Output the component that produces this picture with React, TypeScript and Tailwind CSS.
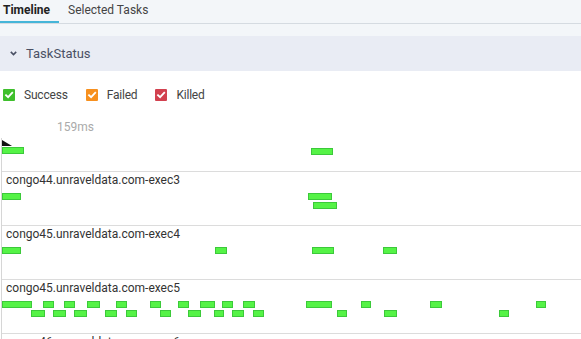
import React from "react"

type Bar = { x1: number; x2: number; line: 0 | 1 }

interface Row {
  label?: string
  bars: Bar[]
}

const rows: Row[] = [
  {
    label: "congo44.unraveldata.com-exec3",
    bars: [
      { x1: 2, x2: 21, line: 0 },
      { x1: 308, x2: 332, line: 0 },
      { x1: 313, x2: 337, line: 1 },
    ],
  },
  {
    label: "congo45.unraveldata.com-exec4",
    bars: [
      { x1: 2, x2: 21, line: 0 },
      { x1: 215, x2: 227, line: 0 },
      { x1: 312, x2: 334, line: 0 },
      { x1: 383, x2: 397, line: 0 },
    ],
  },
  {
    label: "congo45.unraveldata.com-exec5",
    bars: [
      [2, 32], [43, 54], [64, 75], [87, 100], [116, 127], [150, 161], [178, 189], [200, 215], [222, 233], [243, 255],
      [306, 332], [361, 371], [430, 442], [536, 546],
    ]
      .map(([a, b]) => ({ x1: a, x2: b, line: 0 as const }))
      .concat(
        [
          [31, 45], [53, 66], [74, 87], [105, 117], [126, 137], [160, 171], [188, 201], [214, 224], [232, 244], [253, 264],
          [337, 347], [384, 397], [499, 509],
        ].map(([a, b]) => ({ x1: a, x2: b, line: 1 as const })),
      ),
  },
  {
    label: "congo46.unraveldata.com-exec6",
    bars: [],
  },
]

const legend = [
  { name: "Success", color: "bg-[#3fbf2c]" },
  { name: "Failed", color: "bg-[#f7901e]" },
  { name: "Killed", color: "bg-[#d2414f]" },
]

function Check() {
  return (
    <svg viewBox="0 0 12 12" className="h-3 w-3">
      <path d="M3 6.2 L5.1 8.2 L9.2 3.8" fill="none" stroke="white" strokeWidth="1.8" strokeLinecap="square" />
    </svg>
  )
}

function TaskBar({ bar, top }: { bar: Bar; top: number }) {
  // x values are page coords, the row starts at x=2
  return (
    <div
      className="absolute h-[7px] border border-[#3cc93a] bg-[#55f346]"
      style={{ left: bar.x1 - 2, width: bar.x2 - bar.x1, top: top + bar.line * 9 }}
    />
  )
}

export default function App() {
  return (
    <div className="h-[339px] w-[581px] overflow-hidden bg-white font-['Roboto',sans-serif]">
      {/* tabs */}
      <div className="bg-[#f3f6f9] pb-[12px]">
        <div className="flex h-6 items-end border-b border-[#d5dbe1] text-[12px]">
          <div className="flex h-[23px] w-[59px] flex-col">
            <span className="pl-[3px] pt-[2px] font-bold leading-4 text-[#222]">Timeline</span>
            <div className="mt-auto h-[2px] bg-[#45b5d8]" />
          </div>
          <span className="h-[23px] pl-[9px] pt-[2px] leading-4 text-[#444]">Selected Tasks</span>
        </div>
      </div>

      {/* section header */}
      <div className="flex h-[35px] items-center gap-[9px] bg-[#e9ecf4] pl-[10px] text-[13px] text-[#4a5064]">
        <svg viewBox="0 0 7 5" className="h-[5px] w-[7px]">
          <path d="M0.8 0.9 L3.5 3.6 L6.2 0.9" fill="none" stroke="#4a5064" strokeWidth="1.6" />
        </svg>
        <span>TaskStatus</span>
      </div>

      {/* legend */}
      <div className="mt-[18px] flex h-3 items-center pl-[3px] text-[12px] text-[#444]">
        {legend.map((l, i) => (
          <div key={l.name} className={`flex items-center ${i === 0 ? "" : "ml-[18px]"}`}>
            <span className={`flex h-3 w-3 items-center justify-center rounded-[1px] ${l.color}`}>
              <Check />
            </span>
            <span className="ml-[9px] leading-3 tracking-[-0.2px]">{l.name}</span>
          </div>
        ))}
      </div>

      <div className="mt-[18px] pl-[57px] text-[12px] leading-4 text-[#aaa]">159ms</div>

      {/* timeline */}
      <div className="ml-px mt-[3px] border-l border-[#d6d6d6]">
        <div className="relative h-[33px]">
          <svg viewBox="0 0 10 6" className="absolute left-0 top-[2px] h-[6px] w-[10px]">
            <polygon points="0,0 10,6 0,6" fill="#111" />
          </svg>
          <TaskBar bar={{ x1: 2, x2: 24, line: 0 }} top={9} />
          <TaskBar bar={{ x1: 311, x2: 333, line: 0 }} top={10} />
        </div>
        {rows.map((row) => (
          <div key={row.label} className="relative h-[54px] border-t border-[#dcdcdc]">
            <div className="pl-1 text-[12px] leading-4 text-[#333]">{row.label}</div>
            {row.bars.map((b, i) => (
              <TaskBar key={i} bar={b} top={21} />
            ))}
          </div>
        ))}
      </div>
    </div>
  )
}
